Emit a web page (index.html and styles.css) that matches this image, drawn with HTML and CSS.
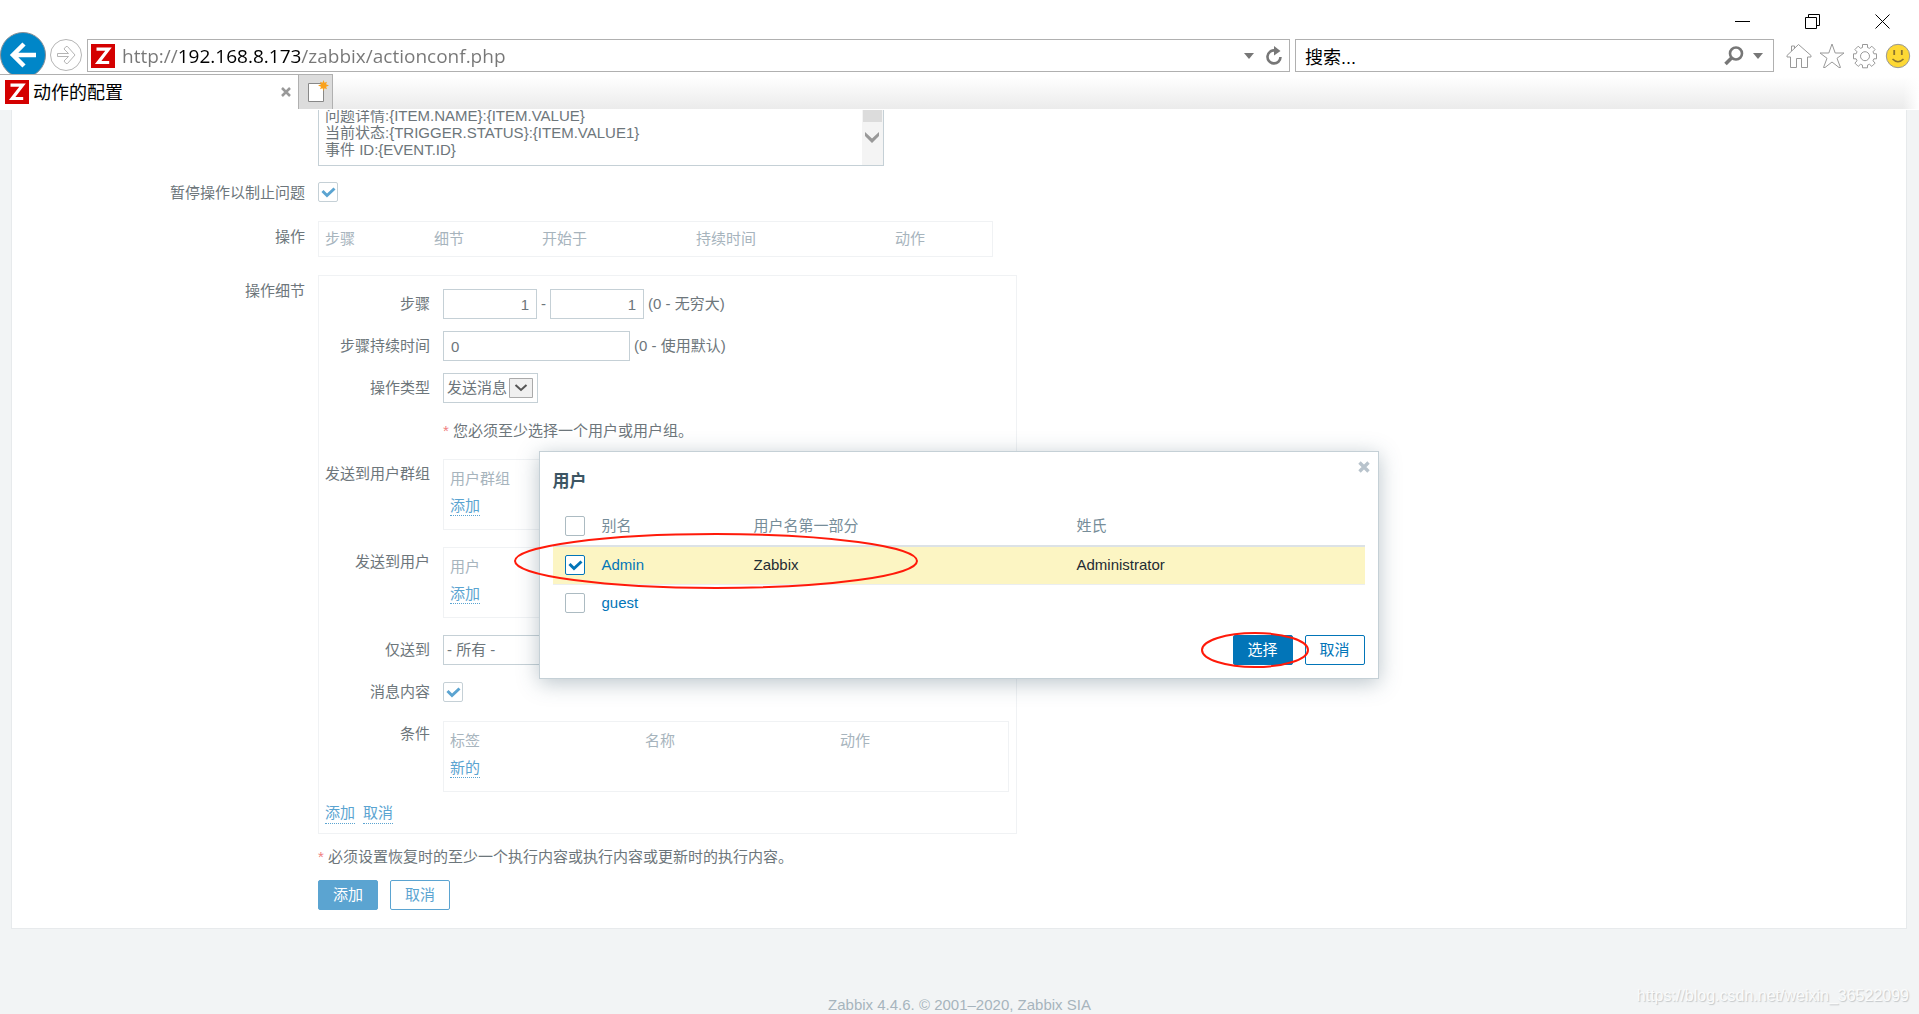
FILE: index.html
```html
<!DOCTYPE html>
<html lang="zh-CN">
<head>
<meta charset="utf-8">
<title>动作的配置</title>
<link rel="stylesheet" href="styles.css">
</head>
<body>
<header class="browser">
  <div class="window-controls">
    <button class="win-btn" aria-label="最小化"><svg width="16" height="16"><path d="M0 7.500h15" stroke="#000" fill="none"/></svg></button>
    <button class="win-btn" aria-label="还原"><svg width="16" height="16"><path d="M.5 3.500h11v11H.5zM3.500 3.500v-3h11v11h-3" stroke="#000" fill="none"/></svg></button>
    <button class="win-btn" aria-label="关闭"><svg width="16" height="16"><path d="M.5.5l14 14M14.500.5l-14 14" stroke="#000" fill="none"/></svg></button>
  </div>
  <div class="toolbar">
    <button class="nav-back" aria-label="后退"><svg width="46" height="46" viewBox="0 0 46 46"><circle cx="23" cy="23" r="22.500" fill="#0086c8" stroke="#8a8f94"/><path d="M36 23H14M24 12L13 23l11 11" stroke="#fff" stroke-width="4.500" fill="none"/></svg></button>
    <button class="nav-forward" aria-label="前进"><svg width="32" height="32" viewBox="0 0 32 32"><circle cx="16" cy="16" r="15.500" fill="#fff" stroke="#b5b5b5"/><path d="M7.500 14.500h11l-4.500-4.500 2-2.500h1.500l7.500 8.500-7.500 8.500H16l-2-2.500 4.500-4.500h-11z" fill="none" stroke="#b5b5b5"/></svg></button>
    <div class="address">
      <svg class="favicon" width="24" height="24" viewBox="0 0 24 24"><path fill="#d40000" d="M0 0h24v24H0z"/><path d="M5.500 5.200h12L7.200 18.500h11" fill="none" stroke="#fff" stroke-width="3.200"/></svg>
      <input class="url" type="text" aria-label="地址" value="http://192.168.8.173/zabbix/actionconf.php">
      <svg class="caret" width="10" height="6"><path d="M0 0h10L5 6z" fill="#777"/></svg>
      <button class="plain" aria-label="刷新"><svg width="18" height="20" viewBox="0 0 18 20"><path d="M10 4.500A6.500 6.500 0 1 0 15.500 11" fill="none" stroke="#777" stroke-width="2.600"/><path d="M9 0l6.500 5L9 9.500z" fill="#777"/></svg></button>
    </div>
    <div class="search">
      <input class="search-text" type="text" aria-label="搜索" value="搜索...">
      <button class="plain" aria-label="搜索"><svg width="20" height="20" viewBox="0 0 20 20"><circle cx="12" cy="7.500" r="6" fill="none" stroke="#777" stroke-width="2.600"/><path d="M8 11.500L1.500 18" stroke="#777" stroke-width="3.500"/></svg></button>
      <svg class="caret" width="10" height="6"><path d="M0 0h10L5 6z" fill="#777"/></svg>
    </div>
    <nav class="tools">
      <button class="plain" aria-label="主页"><svg width="26" height="26" viewBox="0 0 26 26"><path d="M1 12.500L12.500 1.500 25 12.500v1.500h-3.500v10.500h-6v-9h-5v9h-6V14H1zM5.500 8V3h3v2.500" fill="none" stroke="#999"/></svg></button>
      <button class="plain" aria-label="收藏夹"><svg width="26" height="26" viewBox="0 0 26 26"><path d="M13 1l3.200 9H25l-7 5.300 3.500 9.200h-1.500L13 19l-7 5.500H4.500L8 15.300 1 10h8.800z" fill="none" stroke="#999"/></svg></button>
      <button class="plain" aria-label="工具"><svg width="26" height="26" viewBox="0 0 26 26"><path d="M10.500 1.500h5v3l2 .8 2.300-2.100 3.300 3.300-2.100 2.300.9 2h2.600v5h-2.600l-.9 2 2.100 2.300-3.300 3.300-2.300-2.100-2 .8v2.700h-5v-2.700l-2-.8-2.300 2.100-3.300-3.300L5 17.800l-.9-2H1.500v-5h2.600l.9-2-2.100-2.300 3.300-3.300 2.300 2.100 2-.8z" fill="none" stroke="#999"/><circle cx="13" cy="13.200" r="4.500" fill="none" stroke="#999"/></svg></button>
      <button class="plain" aria-label="反馈"><svg width="26" height="26" viewBox="0 0 26 26"><circle cx="13" cy="13" r="11.700" fill="#fdd835" stroke="#999"/><path d="M9.200 7v5M16.800 7v5" stroke="#8a7430" stroke-width="1.800"/><path d="M7.500 16q5.500 5.500 11 0" fill="none" stroke="#8a7430" stroke-width="1.600"/></svg></button>
    </nav>
  </div>
  <div class="tabs">
    <div class="tab">
      <svg class="favicon" width="24" height="24" viewBox="0 0 24 24"><path fill="#d40000" d="M0 0h24v24H0z"/><path d="M5.500 5.200h12L7.200 18.500h11" fill="none" stroke="#fff" stroke-width="3.200"/></svg>
      <span class="tab-title">动作的配置</span>
      <button class="plain" aria-label="关闭标签页"><svg width="10" height="10"><path d="M1 1l8 8M9 1L1 9" stroke="#999" stroke-width="2.500"/></svg></button>
    </div>
    <button class="new-tab" aria-label="新建标签页"><svg width="22" height="24" viewBox="0 0 22 24"><path d="M1.500 3.500h15v18h-15z" fill="#fff" stroke="#888"/><path d="M16.500 0l1 2.700 2.500-1-1 2.600 3 1.200-3 1.200 1 2.600-2.500-1-1 2.700-1-2.700-2.500 1 1-2.600-3-1.200 3-1.200-1-2.600 2.500 1z" fill="#f9a11b"/></svg></button>
    <div class="tab-strip"></div>
  </div>
</header>

<div class="viewport">
  <main class="panel">
    <form class="form">
      <div class="row">
        <label class="label" for="msg"></label>
        <div class="message">
          <textarea id="msg" class="message-text" aria-label="消息">问题详情:{ITEM.NAME}:{ITEM.VALUE}
当前状态:{TRIGGER.STATUS}:{ITEM.VALUE1}
事件 ID:{EVENT.ID}</textarea>
          <div class="scrollbar"><span class="thumb"></span><svg width="14" height="11"><path d="M0 0l7 6.500L14 0v4l-7 7-7-7z" fill="#999"/></svg></div>
        </div>
      </div>
      <div class="row">
        <label class="label check-label" for="pause">暂停操作以制止问题</label>
        <input id="pause" class="check" type="checkbox" checked>
      </div>
      <div class="row operations-row">
        <span class="label">操作</span>
        <table class="box operations">
          <tr><th class="c-step">步骤</th><th class="c-detail">细节</th><th class="c-start">开始于</th><th class="c-time">持续时间</th><th>动作</th></tr>
        </table>
      </div>
      <div class="row">
        <span class="label">操作细节</span>
        <div class="details">
          <div class="sub">
            <label class="label" for="from">步骤</label>
            <div class="field"><input id="from" class="text num" type="text" value="1"><span>-</span><input class="text num" type="text" aria-label="结束步骤" value="1"><span>(0 - 无穷大)</span></div>
          </div>
          <div class="sub">
            <label class="label" for="dur">步骤持续时间</label>
            <div class="field"><input id="dur" class="text dur" type="text" value="0"><span>(0 - 使用默认)</span></div>
          </div>
          <div class="sub">
            <label class="label" for="type">操作类型</label>
            <div class="field"><div class="picker"><select id="type" class="select type"><option>发送消息</option></select><svg class="arrow" width="24" height="20"><path d="M.5.5h23v19H.5z" fill="#f0f0f0" stroke="#aaa"/><path d="M6.500 7l5.500 5 5.500-5" fill="none" stroke="#555" stroke-width="2"/></svg></div></div>
          </div>
          <div class="sub">
            <span></span>
            <p class="note hint"><span class="star">*</span> 您必须至少选择一个用户或用户组。</p>
          </div>
          <div class="sub">
            <span class="label">发送到用户群组</span>
            <table class="box list"><tr><th>用户群组</th></tr><tr><td><a class="link" href="#">添加</a></td></tr></table>
          </div>
          <div class="sub">
            <span class="label">发送到用户</span>
            <table class="box list"><tr><th>用户</th></tr><tr><td><a class="link" href="#">添加</a></td></tr></table>
          </div>
          <div class="sub">
            <label class="label" for="only">仅送到</label>
            <div class="field"><select id="only" class="select only"><option>- 所有 -</option></select></div>
          </div>
          <div class="sub">
            <label class="label" for="content">消息内容</label>
            <div class="field"><input id="content" class="check" type="checkbox" checked></div>
          </div>
          <div class="sub">
            <span class="label">条件</span>
            <table class="box list conditions"><tr><th class="c-tag">标签</th><th class="c-tag">名称</th><th>动作</th></tr><tr><td colspan="3"><a class="link" href="#">新的</a></td></tr></table>
          </div>
          <div class="actions"><a class="link" href="#">添加</a><a class="link" href="#">取消</a></div>
        </div>
      </div>
      <div class="row">
        <span></span>
        <p class="note"><span class="star">*</span> 必须设置恢复时的至少一个执行内容或执行内容或更新时的执行内容。</p>
      </div>
      <div class="row">
        <span></span>
        <div class="buttons"><button type="button" class="btn dim-solid">添加</button><button type="button" class="btn dim">取消</button></div>
      </div>
    </form>
  </main>
  <footer class="footer">Zabbix 4.4.6. © 2001–2020, Zabbix SIA</footer>

  <section class="dialog" role="dialog" aria-label="用户">
    <button class="plain close" aria-label="关闭"><svg width="12" height="12"><path d="M1.500 1.500l9 9M10.500 1.500l-9 9" stroke="#b8c3cc" stroke-width="3.400"/></svg></button>
    <h4 class="dialog-title">用户</h4>
    <table class="users">
      <thead><tr><th class="u-check"><input class="check" type="checkbox" aria-label="全选"></th><th class="u-alias">别名</th><th class="u-name">用户名第一部分</th><th>姓氏</th></tr></thead>
      <tbody>
        <tr class="selected"><td><input class="check strong" type="checkbox" aria-label="Admin" checked></td><td><a href="#">Admin</a></td><td>Zabbix</td><td>Administrator</td></tr>
        <tr><td><input class="check" type="checkbox" aria-label="guest"></td><td><a href="#">guest</a></td><td></td><td></td></tr>
      </tbody>
    </table>
    <div class="buttons dialog-buttons"><button type="button" class="btn solid">选择</button><button type="button" class="btn">取消</button></div>
    <svg class="mark mark-row" width="406" height="58"><ellipse cx="203" cy="29" rx="201" ry="27" fill="none" stroke="#ff1a0a" stroke-width="2"/></svg>
    <svg class="mark mark-button" width="112" height="38"><ellipse cx="56" cy="19" rx="53" ry="17" fill="none" stroke="#ff1a0a" stroke-width="2"/></svg>
  </section>
  <span class="watermark">https://blog.csdn.net/weixin_36522099</span>
</div>
</body>
</html>
```
FILE: styles.css
```css
* { box-sizing: border-box; }

body {
  margin: 0;
  height: 100vh;
  display: flex;
  flex-direction: column;
  overflow: hidden;
  background: #fff;
  font: 15px/20px "Liberation Sans", "Noto Sans CJK SC", sans-serif;
  color: #6d767b;
}

input, textarea, select, button { font: inherit; color: inherit; margin: 0; }
p, h4 { margin: 0; }
svg { display: block; flex: none; }

.plain, .win-btn, .nav-back, .nav-forward {
  padding: 0;
  border: 0;
  background: none;
}

/* Browser frame */
.browser { flex: none; height: 110px; }
.window-controls {
  display: flex;
  justify-content: flex-end;
  gap: 54px;
  height: 32px;
  padding: 14px 28px 0 0;
}
.win-btn { width: 16px; height: 16px; }
.toolbar {
  display: flex;
  align-items: flex-start;
  height: 42px;
  overflow: hidden;
}
.nav-back { width: 46px; height: 42px; }
.nav-forward { margin: 7px 5px 0 4px; }
.address, .search {
  display: flex;
  align-items: center;
  height: 33px;
  margin-top: 7px;
  border: 1px solid #b0b0b0;
}
.address { flex: 1; padding: 0 6px 0 3px; gap: 7px; }
.search { width: 479px; margin-left: 5px; padding: 0 10px 0 9px; gap: 9px; }
.url, .search-text {
  flex: 1;
  min-width: 0;
  height: 31px;
  padding: 0;
  border: 0;
  outline: 0;
  background: none;
  font-size: 18px;
  color: #000;
}
.url {
  font-family: "Open Sans", sans-serif;
  font-size: 19px;
  background: linear-gradient(90deg, #777 57px, #000 57px, #000 179px, #777 179px);
  -webkit-background-clip: text;
  background-clip: text;
  color: transparent;
}
.address .caret { margin-right: 4px; }
.tools { display: flex; gap: 7px; padding: 11px 8px 0 12px; }

.tabs { display: flex; height: 35px; }
.tab {
  display: flex;
  align-items: center;
  width: 298px;
  padding: 0 7px 0 5px;
  gap: 4px;
  border-top: 1px solid #b0b0b0;
}
.tab-title { flex: 1; font-size: 18px; line-height: 22px; padding-top: 2px; color: #000; }
.new-tab {
  width: 35px;
  padding: 0 0 0 8px;
  border: 1px solid #b0b0b0;
  border-bottom: 0;
  background: #dcdcdc;
}
.tab-strip {
  flex: 1;
  background: linear-gradient(90deg, transparent calc(100% - 16px), #fff), linear-gradient(#fff 8%, #ebebeb);
}

/* Page */
.viewport {
  position: relative;
  flex: 1;
  min-height: 0;
  overflow: hidden;
  background: #f2f4f5;
}
.panel {
  margin: 0 12px 0 11px;
  padding-bottom: 18px;
  border: 1px solid #e7eaec;
  border-top: 0;
  background: #fff;
}
.form { display: flex; flex-direction: column; gap: 16px; }
.row { display: grid; grid-template-columns: 293px 1fr; column-gap: 13px; align-items: start; }
.label { text-align: right; line-height: 30px; }
.row > .label { line-height: 32px; }
.row > .check-label { line-height: 22px; }

.message { position: relative; width: 566px; height: 56px; overflow: hidden; }
.message-text {
  display: block;
  width: 100%;
  height: 76px;
  margin-top: -20px;
  padding: 16px 24px 0 6px;
  border: 1px solid #c5d0d6;
  resize: none;
  overflow: hidden;
  line-height: 17px;
  white-space: pre;
}
.scrollbar {
  position: absolute;
  top: 0;
  right: 1px;
  width: 21px;
  height: 55px;
  background: #f4f4f4;
}
.thumb { display: block; height: 12px; margin: 0 1px 10px; background: #dcdcdc; }
.scrollbar svg { margin-left: 3px; }

.check {
  appearance: none;
  display: block;
  width: 20px;
  height: 20px;
  border: 1px solid #c5d0d6;
  border-radius: 2px;
  background: #fff;
}
.check:checked {
  background: url("data:image/svg+xml,%3Csvg xmlns='http://www.w3.org/2000/svg' width='18' height='18'%3E%3Cpath d='M3.500 8l4.500 4.500L15.500 5.500' fill='none' stroke='%235ba4d1' stroke-width='3'/%3E%3C/svg%3E") #fff;
}
.check.strong:checked {
  border-color: #0275b8;
  background: url("data:image/svg+xml,%3Csvg xmlns='http://www.w3.org/2000/svg' width='18' height='18'%3E%3Cpath d='M3.500 8l4.500 4.500L15.500 5.500' fill='none' stroke='%230275b8' stroke-width='3'/%3E%3C/svg%3E") #fff;
}

.box {
  border: 1px solid #f0f2f4;
  border-collapse: separate;
  border-spacing: 0;
  table-layout: fixed;
}
.box th, .box td { padding: 0 0 0 6px; text-align: left; font-weight: normal; }
.box th { color: #a7b4bd; }
.operations-row { padding: 1px 0 2px; }
.operations { width: 675px; height: 36px; }
.c-step { width: 109px; }
.c-detail { width: 108px; }
.c-start { width: 154px; }
.c-time { width: 199px; }

.details {
  display: flex;
  flex-direction: column;
  gap: 12px;
  width: 699px;
  padding: 13px 7px 9px 0;
  border: 1px solid #f0f2f4;
}
.sub { display: grid; grid-template-columns: 111px 1fr; column-gap: 13px; align-items: start; }
.field { display: flex; align-items: center; gap: 4px; height: 30px; }
.text {
  height: 30px;
  padding: 0 7px;
  border: 1px solid #c5d0d6;
  background: #fff;
}
.num { width: 94px; text-align: right; }
.dur { width: 187px; }
.picker { position: relative; }
.arrow { position: absolute; top: 5px; right: 5px; pointer-events: none; }
.select {
  appearance: none;
  display: block;
  height: 30px;
  padding: 0 3px;
  border: 1px solid #c5d0d6;
  border-radius: 0;
  background: #fff;
}
.type { width: 95px; }
.only { width: 180px; }
.hint { padding: 6px 0; }
.star { color: #f08080; }

.list { width: 180px; height: 71px; margin-bottom: 5px; padding: 5px 0 9px; }
.conditions { width: 566px; margin: 2px 0 0; }
.c-tag { width: 195px; }
.link {
  padding-bottom: 1px;
  color: #5ba4d1;
  text-decoration: none;
  border-bottom: 1px dotted #5ba4d1;
}
.actions { display: flex; gap: 8px; padding-left: 6px; }
.actions .link { line-height: 18px; }
.note { line-height: 20px; }
.row > .note { line-height: 14px; }
.buttons { display: flex; gap: 12px; }
.btn {
  width: 60px;
  height: 30px;
  padding: 0;
  border: 1px solid #0275b8;
  border-radius: 2px;
  background: #fff;
  color: #0275b8;
}
.btn.solid { background: #0275b8; color: #fff; }
.btn.dim { border-color: #5ba4d1; color: #5ba4d1; }
.btn.dim-solid { border-color: #5ba4d1; background: #5ba4d1; color: #fff; }

.footer { padding-top: 66px; text-align: center; color: #a7b4bd; }

/* User picker */
.dialog {
  position: absolute;
  top: 341px;
  left: 50%;
  width: 840px;
  margin-left: -421px;
  padding: 20px 13px 13px;
  border: 1px solid #c5d0d6;
  background: #fff;
  box-shadow: 0 4px 20px rgba(60, 90, 105, .35);
  color: #1f2c33;
}
.close { position: absolute; top: 9px; right: 8px; }
.dialog-title { font-size: 17px; line-height: 20px; color: #3c5563; }
.users { width: 100%; margin-top: 14px; border-collapse: collapse; table-layout: fixed; }
.users th, .users td { height: 38px; padding: 0; text-align: left; font-weight: normal; }
.users th { height: 40px; border-bottom: 2px solid #dce2e6; color: #768d99; }
.users .check { margin-left: 12px; border-color: #acbbc2; }
.users .check.strong { border-color: #0275b8; }
.users a { color: #0275b8; text-decoration: none; }
.u-check { width: 49px; }
.u-alias { width: 152px; }
.u-name { width: 323px; }
.selected td { background: #fcf5c3; border-bottom: 1px solid #ebeef0; }
.dialog-buttons { justify-content: flex-end; margin-top: 13px; }
.mark { position: absolute; pointer-events: none; }
.mark-row { top: 80px; left: -27px; }
.mark-button { top: 179px; right: 67px; }

.watermark {
  position: absolute;
  right: 10px;
  bottom: 8px;
  font-size: 16px;
  color: #fafbfb;
  text-shadow: 1px 1px 1px #c4c8ca;
}
```
